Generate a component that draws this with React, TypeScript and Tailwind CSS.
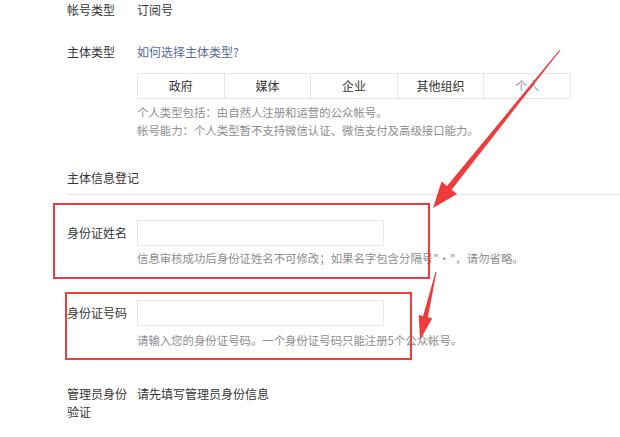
import React from "react";

const types = ["政府", "媒体", "企业", "其他组织", "个人"];

function Label({ children }: { children: React.ReactNode }) {
  return <div className="w-[64px] mr-[6px] shrink-0 leading-[18px] text-[#353535]">{children}</div>;
}

export default function App() {
  return (
    <div
      className="relative w-[620px] h-[437px] overflow-hidden bg-white text-[12px]"
      style={{ fontFamily: '"Noto Sans CJK SC", "Noto Sans", sans-serif' }}
    >
      <div className="pl-[67px]">
        <div className="flex mt-[1px] leading-[18px]">
          <Label>帐号类型</Label>
          <span className="text-[#353535]">订阅号</span>
        </div>

        <div className="flex mt-[24px] leading-[18px]">
          <Label>主体类型</Label>
          <div>
            <a className="text-[#576b95]">如何选择主体类型?</a>
          </div>
        </div>

        <div className="ml-[70px] mt-[12px] flex w-[434px] border border-[#e7e7eb]">
          {types.map((t, i) => (
            <div
              key={t}
              className={`flex-1 h-[24px] flex items-center justify-center ${i > 0 ? "border-l border-[#e7e7eb]" : ""} ${
                t === "个人" ? "text-[#8a9aa8]" : "text-[#353535]"
              }`}
            >
              {t}
            </div>
          ))}
        </div>

        <div className="ml-[70px] mt-[4px] leading-[18px] text-[11.4px] text-[#8d8d8d]">
          <p>个人类型包括：由自然人注册和运营的公众帐号。</p>
          <p>帐号能力：个人类型暂不支持微信认证、微信支付及高级接口能力。</p>
        </div>

        <div className="mt-[30px] pb-[7px] border-b border-[#e7e7eb] leading-[18px] text-[#353535]">主体信息登记</div>

        <div className="mt-[25px] flex items-center">
          <Label>身份证姓名</Label>
          <div className="w-[247px] h-[26px] border border-[#e7e7eb]" />
        </div>
        <p className="ml-[70px] mt-[3px] leading-[18px] text-[11.4px] text-[#8d8d8d]">
          信息审核成功后身份证姓名不可修改；如果名字包含分隔号"·"，请勿省略。
        </p>

        <div className="mt-[33px] flex items-center">
          <Label>身份证号码</Label>
          <div className="w-[247px] h-[26px] border border-[#e7e7eb]" />
        </div>
        <p className="ml-[70px] mt-[5px] leading-[18px] text-[11.4px] text-[#8d8d8d]">
          请输入您的身份证号码。一个身份证号码只能注册5个公众帐号。
        </p>

        <div className="mt-[36px] flex">
          <Label>管理员身份验证</Label>
          <span className="leading-[18px] text-[#353535]">请先填写管理员身份信息</span>
        </div>
      </div>

      {/* annotation boxes */}
      <div className="absolute left-[53px] top-[203px] w-[377px] h-[76px] border-2 border-[#ee3b3b]" />
      <div className="absolute left-[65px] top-[292px] w-[347px] h-[68px] border-2 border-[#ee3b3b]" />

      {/* annotation arrows */}
      <svg className="absolute inset-0 pointer-events-none" width="620" height="437">
        <polygon
          fill="#ee3b3b"
          points="560.4,50.3 451.6,189.7 457.1,194.1 433,208 441.5,181.5 447,185.9 559.6,49.7"
        />
        <polygon
          fill="#ee3b3b"
          points="436.5,272 427.9,317.2 432.3,318.2 420,340 418.7,315 423.1,316 435.5,272"
        />
      </svg>
    </div>
  );
}
